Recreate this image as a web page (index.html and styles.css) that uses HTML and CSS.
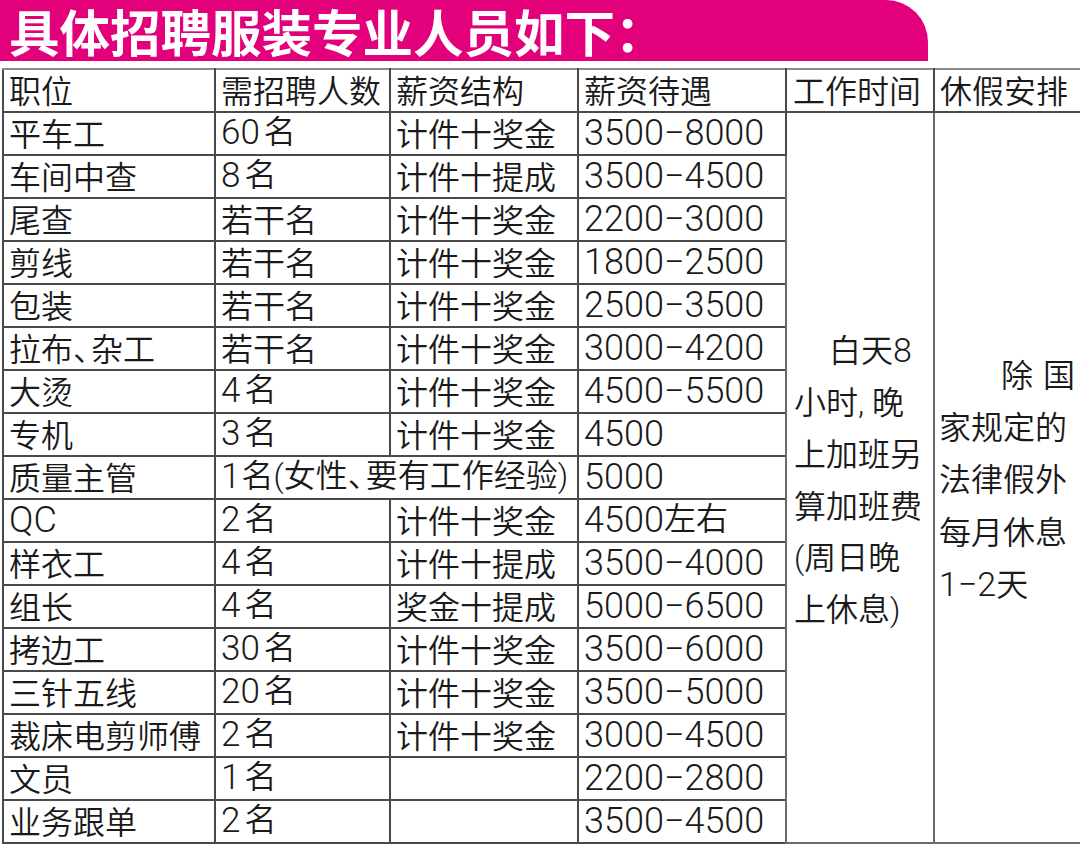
FILE: index.html
```html
<!DOCTYPE html>
<html lang="zh-CN">
<head>
<meta charset="utf-8">
<title>具体招聘服装专业人员如下</title>
<link rel="stylesheet" href="styles.css">
</head>
<body>
<div class="page">
  <div class="band"><h1 class="title">具体招聘服装专业人员如下：</h1></div>
  <table class="jobs">
    <colgroup>
      <col class="c1"><col class="c2"><col class="c3"><col class="c4"><col class="c5"><col class="c6">
    </colgroup>
    <thead>
      <tr class="head">
        <th>职位</th><th>需招聘人数</th><th>薪资结构</th><th>薪资待遇</th><th class="hw">工作时间</th><th>休假安排</th>
      </tr>
    </thead>
    <tbody>
      <tr>
        <td>平车工</td><td><span class="cnt">60</span>名</td><td>计件十奖金</td><td><span class="n">3500−8000</span></td>
        <td class="merge work" rowspan="17">
          <div class="lines">
            <div class="ind1">白天<span class="d">8</span></div>
            <div>小时<span class="cm">,</span>晚</div>
            <div>上加班另</div>
            <div>算加班费</div>
            <div><span class="pr">(</span>周日晚</div>
            <div>上休息<span class="pr">)</span></div>
          </div>
        </td>
        <td class="merge rest" rowspan="17">
          <div class="lines">
            <div class="ind2">除<span class="gap">国</span></div>
            <div>家规定的</div>
            <div>法律假外</div>
            <div>每月休息</div>
            <div><span class="d">1−2</span>天</div>
          </div>
        </td>
      </tr>
      <tr><td>车间中查</td><td><span class="cnt">8</span>名</td><td>计件十提成</td><td><span class="n">3500−4500</span></td></tr>
      <tr><td>尾查</td><td>若干名</td><td>计件十奖金</td><td><span class="n">2200−3000</span></td></tr>
      <tr><td>剪线</td><td>若干名</td><td>计件十奖金</td><td><span class="n">1800−2500</span></td></tr>
      <tr><td>包装</td><td>若干名</td><td>计件十奖金</td><td><span class="n">2500−3500</span></td></tr>
      <tr><td>拉布<span class="dun">、</span>杂工</td><td>若干名</td><td>计件十奖金</td><td><span class="n">3000−4200</span></td></tr>
      <tr><td>大烫</td><td><span class="cnt">4</span>名</td><td>计件十奖金</td><td><span class="n">4500−5500</span></td></tr>
      <tr><td>专机</td><td><span class="cnt">3</span>名</td><td>计件十奖金</td><td><span class="n">4500</span></td></tr>
      <tr><td>质量主管</td><td colspan="2"><span class="cnt one">1</span>名<span class="pr">(</span>女性<span class="dun">、</span>要有工作经验<span class="pr">)</span></td><td><span class="n">5000</span></td></tr>
      <tr><td><span class="n">QC</span></td><td><span class="cnt">2</span>名</td><td>计件十奖金</td><td><span class="n">4500</span>左右</td></tr>
      <tr><td>样衣工</td><td><span class="cnt">4</span>名</td><td>计件十提成</td><td><span class="n">3500−4000</span></td></tr>
      <tr><td>组长</td><td><span class="cnt">4</span>名</td><td>奖金十提成</td><td><span class="n">5000−6500</span></td></tr>
      <tr><td>拷边工</td><td><span class="cnt">30</span>名</td><td>计件十奖金</td><td><span class="n">3500−6000</span></td></tr>
      <tr><td>三针五线</td><td><span class="cnt">20</span>名</td><td>计件十奖金</td><td><span class="n">3500−5000</span></td></tr>
      <tr><td>裁床电剪师傅</td><td><span class="cnt">2</span>名</td><td>计件十奖金</td><td><span class="n">3000−4500</span></td></tr>
      <tr><td>文员</td><td><span class="cnt">1</span>名</td><td></td><td><span class="n">2200−2800</span></td></tr>
      <tr><td>业务跟单</td><td><span class="cnt">2</span>名</td><td></td><td><span class="n">3500−4500</span></td></tr>
    </tbody>
  </table>
</div>
</body>
</html>
```
FILE: styles.css
```css
html, body {
  margin: 0;
  padding: 0;
  background: #ffffff;
}

.page {
  width: 1080px;
  height: 844px;
  overflow: hidden;
  font-family: "Noto Sans CJK SC", "Noto Sans", sans-serif;
  color: #1a1a1a;
}

.band {
  width: 928px;
  height: 61px;
  background: #e2007b;
  border-top-right-radius: 42px;
  margin-bottom: 7px;
}

.title {
  margin: 0;
  padding-left: 9px;
  font-size: 50.5px;
  font-weight: 700;
  line-height: 60px;
  color: #ffffff;
  white-space: nowrap;
}

.jobs {
  margin-left: 2px;
  width: 1080px;
  table-layout: fixed;
  border-collapse: collapse;
  font-size: 32px;
  font-weight: 350;
  line-height: 30px;
}

.c1 { width: 212px; }
.c2 { width: 175px; }
.c3 { width: 188px; }
.c4 { width: 208px; }
.c5 { width: 148px; }
.c6 { width: 149px; }

.jobs th,
.jobs td {
  border: 2px solid #4a4a4a;
  padding: 0 0 3px 5px;
  text-align: left;
  font-weight: 350;
  white-space: nowrap;
  vertical-align: middle;
}

.jobs .head th {
  height: 37px;
  border-top-color: #8a8a8a;
  padding-bottom: 4px;
}

.jobs .head th.hw {
  padding-left: 6px;
}

.jobs tbody td {
  height: 38px;
}

.jobs td.merge {
  padding: 0;
  white-space: normal;
  vertical-align: middle;
  border-color: #6a6a6a;
}

.lines {
  line-height: 51.7px;
  padding-top: 2px;
}

.work .lines { padding-left: 7px; }
.rest .lines { padding-left: 4px; padding-top: 0; line-height: 52.2px; }

.ind1 { padding-left: 35px; }
.ind2 { padding-left: 62px; }
.gap { margin-left: 10px; }

.n,
.cnt,
.d,
.pr,
.cm {
  font-family: Roboto, "Liberation Sans", Arial, sans-serif;
  font-weight: 350;
  line-height: 1;
}

.n {
  font-size: 36px;
  vertical-align: -2px;
}

.cnt {
  font-size: 35px;
  margin-right: 4px;
  vertical-align: -1px;
}

.cnt.one { margin-right: 1px; }

.d { font-size: 34px; }

.cm {
  display: inline-block;
  width: 14px;
}

.pr {
  font-size: 32px;
  font-weight: 300;
}

.dun {
  display: inline-block;
  width: 18px;
}
```
